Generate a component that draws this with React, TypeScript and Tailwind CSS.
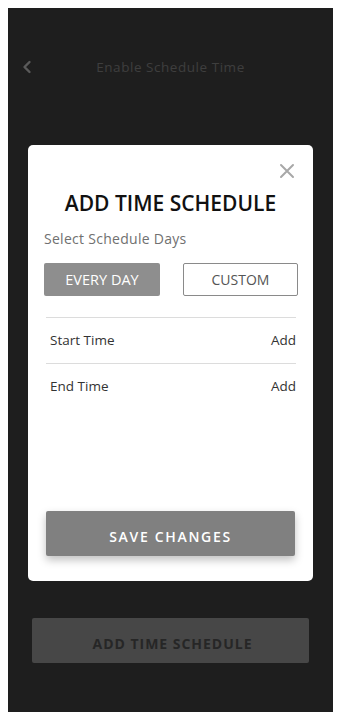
import React from 'react';

const font = { fontFamily: '"Open Sans", "Liberation Sans", sans-serif' };

const CloseIcon: React.FC = () => (
    <svg width="16" height="16" viewBox="0 0 16 16" fill="none" stroke="#a8a8a8" strokeWidth="2" strokeLinecap="round">
        <path d="M2 2 L14 14 M14 2 L2 14" />
    </svg>
);

const BackIcon: React.FC = () => (
    <svg width="10" height="14" viewBox="0 0 10 14" fill="none" stroke="#5a5a5a" strokeWidth="2.4" strokeLinecap="round" strokeLinejoin="round">
        <path d="M7.5 2 L2.5 7 L7.5 12" />
    </svg>
);

const TimeRow: React.FC<{ label: string }> = ({ label }) => (
    <div className="flex items-center justify-between border-t border-[#dcdcdc] pl-1 h-[46px] text-[13.5px] text-[#333]">
        <span>{label}</span>
        <span>Add</span>
    </div>
);

export default function App() {
    return (
        <div className="w-[342px] h-[718px] bg-white pt-2 pl-2 pr-[9px] pb-[6px]" style={font}>
            <div className="h-full bg-[#1e1e1e] flex flex-col">
                {/* header */}
                <div className="relative flex items-center justify-center mt-[51px] h-4">
                    <div className="absolute left-[14px] top-[1px]">
                        <BackIcon />
                    </div>
                    <span className="text-[13.5px] tracking-[0.04em] text-[#3e3e3e]">Enable Schedule Time</span>
                </div>

                {/* modal */}
                <div className="mx-5 mt-[70px] h-[436px] bg-white rounded-[5px] flex flex-col px-4">
                    <div className="flex justify-end pt-[18px] pr-[2px]">
                        <CloseIcon />
                    </div>
                    <h2 className="text-center text-[21px] font-semibold leading-7 text-[#111] mt-[10px]">ADD TIME SCHEDULE</h2>
                    <p className="text-[14px] tracking-[0.02em] text-[#707070] mt-[11px]">Select Schedule Days</p>
                    <div className="flex justify-between mt-[14px]">
                        <button className="w-[116px] h-[33px] bg-[#8e8e8e] rounded-[2px] text-white text-[14.5px]">EVERY DAY</button>
                        <button className="w-[115px] h-[33px] border border-[#8a8a8a] rounded-[2px] text-[#555] text-[14px] -mr-[1px]">CUSTOM</button>
                    </div>
                    <div className="mt-[21px] px-[2px] -mr-[1px]">
                        <TimeRow label="Start Time" />
                        <TimeRow label="End Time" />
                    </div>
                    <div className="flex-1" />
                    <button className="mx-[2px] mb-[25px] h-[45px] pt-[5px] bg-[#808080] rounded-[2px] text-white text-[14px] font-semibold tracking-[0.12em] shadow-[0_4px_8px_rgba(0,0,0,0.25)]">
                        SAVE CHANGES
                    </button>
                </div>

                {/* bottom button */}
                <button className="mx-6 mt-[37px] h-[45px] pt-[6px] bg-[#474747] rounded-[2px] text-[#262626] text-[14px] font-bold tracking-[0.07em] pl-1">
                    ADD TIME SCHEDULE
                </button>
            </div>
        </div>
    );
}
